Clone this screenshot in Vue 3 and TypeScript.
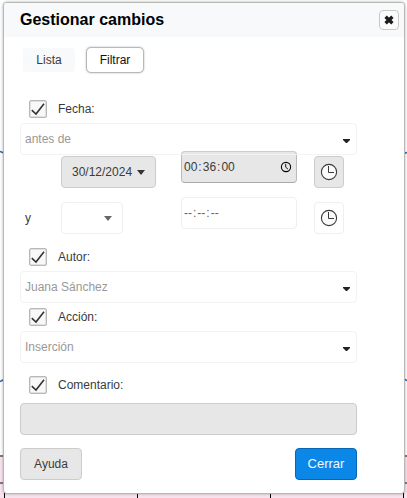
<script setup lang="ts">
import { ref } from 'vue'

interface TimeRow {
  conjunction: string
  date: string
  time: string[]
  active: boolean
}

interface Filter {
  key: string
  label: string
  value: string
  checked: boolean
}

const rows = ref<TimeRow[]>([
  { conjunction: '', date: '30/12/2024', time: ['00', '36', '00'], active: true },
  { conjunction: 'y', date: '', time: ['--', '--', '--'], active: false },
])

const filters = ref<Filter[]>([
  { key: 'author', label: 'Autor:', value: 'Juana Sánchez', checked: true },
  { key: 'action', label: 'Acción:', value: 'Inserción', checked: true },
])

const dateChecked = ref(true)
const commentChecked = ref(true)
const comment = ref('')
</script>

<template>
  <main class="stage">
    <svg class="backdrop" width="407" height="498" viewBox="0 0 407 498" aria-hidden="true">
      <rect y="456" width="407" height="42" fill="#f8e4ee" />
      <path d="M0 456H407M0 483H407" stroke="#85757e" stroke-width="2" />
      <path d="M4.500 456V498M137.500 456V498M270.500 456V498M403.500 456V498" stroke="#000" />
      <path d="M0 151.500L4 153M404 153.500L407 152.500M0 381.500L4 379.500M404 379L407 380.500" stroke="#2865ac" stroke-width="1.500" />
    </svg>

    <section class="dialog">
      <header class="head">
        <h1>Gestionar cambios</h1>
        <button class="close" aria-label="Cerrar diálogo">
          <svg width="10" height="10" viewBox="0 0 10 10">
            <path d="M1.600 1.800L8.400 8.200M8.400 1.800L1.600 8.200" stroke="#1b1c1e" stroke-width="3.400" />
          </svg>
        </button>
      </header>

      <div class="body">
        <nav class="tabs">
          <button class="tab">Lista</button>
          <button class="tab current">Filtrar</button>
        </nav>

        <label class="check">
          <input v-model="dateChecked" type="checkbox" />
          <span class="box">
            <svg v-if="dateChecked" width="16" height="16" viewBox="0 0 16 16"><path d="M1.800 9.200L6 13L14 2.800" /></svg>
          </span>
          Fecha:
        </label>
        <div class="select over">
          antes de
          <svg class="caret" width="7" height="4" viewBox="0 0 7 4"><path d="M0 0H7V1L4 4H3L0 1Z" /></svg>
        </div>

        <div v-for="(row, i) in rows" :key="i" class="range" :class="{ active: row.active }">
          <span class="word">{{ row.conjunction }}</span>
          <div class="slot">
            <button class="date">
              <span>{{ row.date }}</span>
              <svg width="8" height="5" viewBox="0 0 8 5"><path d="M0 0H8L4 5Z" /></svg>
            </button>
          </div>
          <div class="time">
            <span class="digits">
              <template v-for="(part, n) in row.time" :key="n"><i v-if="n">:</i><b>{{ part }}</b></template>
            </span>
            <svg v-if="row.active" width="12" height="12" viewBox="0 0 12 12">
              <circle cx="6" cy="6" r="4.600" fill="none" stroke="#000" stroke-width="1.100" />
              <path d="M5.700 3V6.200L7.900 8" fill="none" stroke="#000" stroke-width="0.900" />
            </svg>
          </div>
          <button class="clock" aria-label="Hora actual">
            <svg width="18" height="18" viewBox="0 0 18 18">
              <circle cx="9" cy="9" r="7.600" fill="#fafafa" stroke="#3a3a38" stroke-width="1.100" />
              <path d="M8.500 3V9.500H14" fill="none" stroke="#3a3a38" />
            </svg>
          </button>
        </div>

        <div v-for="filter in filters" :key="filter.key" class="group">
          <label class="check">
            <input v-model="filter.checked" type="checkbox" />
            <span class="box">
              <svg v-if="filter.checked" width="16" height="16" viewBox="0 0 16 16"><path d="M1.800 9.200L6 13L14 2.800" /></svg>
            </span>
            {{ filter.label }}
          </label>
          <div class="select">
            {{ filter.value }}
            <svg class="caret" width="7" height="4" viewBox="0 0 7 4"><path d="M0 0H7V1L4 4H3L0 1Z" /></svg>
          </div>
        </div>

        <label class="check last">
          <input v-model="commentChecked" type="checkbox" />
          <span class="box">
            <svg v-if="commentChecked" width="16" height="16" viewBox="0 0 16 16"><path d="M1.800 9.200L6 13L14 2.800" /></svg>
          </span>
          Comentario:
        </label>
        <input v-model="comment" class="comment" type="text" />

        <footer class="actions">
          <button class="help">Ayuda</button>
          <button class="primary">Cerrar</button>
        </footer>
      </div>
    </section>
  </main>
</template>

<style>
body {
  overflow: hidden;
  background: #fefefe;
}
</style>

<style scoped>
* {
  box-sizing: border-box;
}

.stage {
  position: relative;
  width: 407px;
  height: 498px;
  padding: 2px 2px 4px 3px;
  font: 12px/16px "Liberation Sans", sans-serif;
  color: #3b3b3b;
}

.backdrop {
  position: absolute;
  top: 0;
  left: 0;
}

svg {
  display: block;
}

button {
  margin: 0;
  padding: 0;
  font: inherit;
  color: inherit;
}

.dialog {
  position: relative;
  height: 492px;
  border: 1px solid #b8b9b4;
  border-radius: 4px;
  background: #fff;
  box-shadow: 0 0 3px rgba(0, 0, 0, 0.3);
}

.head {
  display: flex;
  align-items: center;
  justify-content: space-between;
  height: 34px;
  padding: 0 5px 0 16px;
  border-radius: 3px 3px 0 0;
  background: #f7f9fb;
}

h1 {
  margin: 0;
  font-size: 16px;
  line-height: 20px;
  color: #000;
}

.close {
  display: grid;
  place-items: center;
  width: 20px;
  height: 20px;
  border: 1px solid #c9c9c9;
  border-radius: 4px;
  background: #fbfbfb;
}

.body {
  width: 353px;
  padding: 10px 0 0 16px;
}

.tabs {
  display: flex;
  align-items: center;
  gap: 11px;
  height: 26px;
  margin-bottom: 27px;
  padding-left: 3px;
}

.tab {
  width: 52px;
  height: 24px;
  border: 0;
  border-radius: 4px;
  background: #f7f9fb;
}

.tab.current {
  width: 58px;
  height: 26px;
  border: 1px solid #b8b8b8;
  border-radius: 5px;
  background: #fff;
  color: #111;
  box-shadow: 0 0 2px rgba(0, 0, 0, 0.3);
}

.check {
  display: flex;
  align-items: center;
  gap: 11px;
  height: 18px;
  margin-bottom: 5px;
  padding-left: 9px;
}

.check input {
  position: absolute;
  opacity: 0;
  pointer-events: none;
}

.box {
  width: 18px;
  height: 18px;
  border: 1px solid #b8b8b8;
  border-radius: 2px;
  background: #f8f8f8;
  box-shadow: inset 0 0 0 0.5px #c8c8c8;
}

.box path {
  fill: none;
  stroke: #333;
  stroke-width: 1.6;
}

.select {
  display: flex;
  align-items: center;
  justify-content: space-between;
  width: 337px;
  height: 32px;
  padding: 0 6px 0 4px;
  border: 1px solid #f3f3f3;
  border-radius: 4px;
  color: #999;
}

.over {
  position: relative;
  z-index: 1;
}

.caret {
  margin-top: 4px;
  fill: #222;
}

.range {
  display: grid;
  grid-template-columns: 41px 120px 133px 30px;
  height: 32px;
  margin: 1px 0 14px;
}

.word {
  padding-left: 5px;
  line-height: 32px;
}

.date {
  display: flex;
  align-items: center;
  justify-content: space-between;
  width: 62px;
  height: 32px;
  padding: 0 10px;
  border: 1px solid #efefef;
  border-radius: 4px;
  background: #fff;
  fill: #666;
}

.active .date {
  width: 95px;
  border-color: #ccc;
  background: #e7e7e7;
  fill: #333;
}

.time {
  display: flex;
  align-items: center;
  justify-content: space-between;
  width: 116px;
  height: 32px;
  margin-top: -5px;
  padding: 0 4px 0 2px;
  border: 1px solid #efefef;
  border-radius: 4px;
  color: #666;
}

.active .time {
  border-color: #ccc #bbb #aaa;
  background: #e7e7e7;
  color: #3b3b3b;
}

.digits {
  display: flex;
}

.digits b {
  font-weight: 400;
}

.digits i {
  padding: 0 1px;
  font-style: normal;
}

.clock {
  display: grid;
  place-items: center;
  width: 30px;
  height: 32px;
  border: 1px solid #efefef;
  border-radius: 4px;
  background: #fff;
}

.active .clock {
  border-color: #ccc;
  background: #e7e7e7;
}

.group {
  margin-bottom: 5px;
}

.last {
  margin: 13px 0 9px;
}

.comment {
  display: block;
  width: 337px;
  height: 32px;
  margin: 0;
  padding: 0 6px;
  border: 1px solid #ccc;
  border-radius: 4px;
  background: #e7e7e7;
}

.actions {
  display: flex;
  justify-content: space-between;
  margin-top: 13px;
}

.actions button {
  width: 62px;
  height: 32px;
  border: 1px solid #ccc;
  border-radius: 4px;
}

.actions .help {
  background: #e7e7e7;
}

.actions .primary {
  border-color: #0767b5;
  background: #0b87e7;
  color: #f4f9fe;
  font-size: 13px;
}
</style>
